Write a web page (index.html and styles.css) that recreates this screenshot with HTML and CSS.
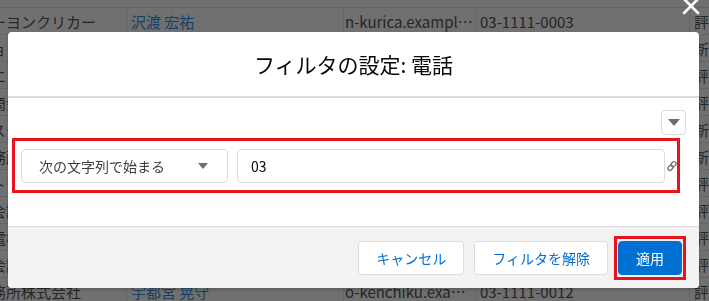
FILE: index.html
```html
<!DOCTYPE html>
<html lang="ja">
<head>
    <meta charset="UTF-8">
    <meta name="viewport" content="width=device-width, initial-scale=1.0">
    <title>フィルタの設定</title>
    <link rel="stylesheet" href="styles.css">
</head>
<body>
    <!-- List view behind the modal -->
    <div class="page">
        <table class="records">
            <tr>
                <td class="col-company">株式会社ピーエーヨンクリカー</td>
                <td class="col-contact"><a href="#">沢渡 宏祐</a></td>
                <td class="col-email">n-kurica.example.co.jp</td>
                <td class="col-phone">03-1111-0003</td>
                <td class="col-status">評価中</td>
            </tr>
            <tr>
                <td class="col-company">株式会社トウキョウ会計事務所</td>
                <td class="col-contact"><a href="#">高橋 一郎</a></td>
                <td class="col-email">t-kaikei.example.co.jp</td>
                <td class="col-phone">03-1111-0004</td>
                <td class="col-status">新規</td>
            </tr>
            <tr>
                <td class="col-company">有限会社サクラエンジニア</td>
                <td class="col-contact"><a href="#">佐藤 花子</a></td>
                <td class="col-email">sakura-eng.example.co.jp</td>
                <td class="col-phone">03-1111-0005</td>
                <td class="col-status">評価中</td>
            </tr>
            <tr>
                <td class="col-company">株式会社ミナト商会株式会社</td>
                <td class="col-contact"><a href="#">鈴木 健太</a></td>
                <td class="col-email">minato.example.co.jp</td>
                <td class="col-phone">03-1111-0006</td>
                <td class="col-status">評価中</td>
            </tr>
            <tr>
                <td class="col-company">日本グローバルスタッフ</td>
                <td class="col-contact"><a href="#">田中 美咲</a></td>
                <td class="col-email">g-staff.example.co.jp</td>
                <td class="col-phone">03-1111-0007</td>
                <td class="col-status">新規</td>
            </tr>
            <tr>
                <td class="col-company">中央建設設計事務所株式会社</td>
                <td class="col-contact"><a href="#">伊藤 直樹</a></td>
                <td class="col-email">chuo-kensetsu.example.co.jp</td>
                <td class="col-phone">03-1111-0008</td>
                <td class="col-status">新規</td>
            </tr>
            <tr>
                <td class="col-company">株式会社ネクストソフト</td>
                <td class="col-contact"><a href="#">渡辺 翔</a></td>
                <td class="col-email">nextsoft.example.co.jp</td>
                <td class="col-phone">03-1111-0009</td>
                <td class="col-status">評価中</td>
            </tr>
            <tr>
                <td class="col-company">株式会社ヤマト会計事務所</td>
                <td class="col-contact"><a href="#">山本 彩</a></td>
                <td class="col-email">yamato.example.co.jp</td>
                <td class="col-phone">03-1111-0010</td>
                <td class="col-status">評価中</td>
            </tr>
            <tr>
                <td class="col-company">株式会社ホクト電機工業所</td>
                <td class="col-contact"><a href="#">中村 亮</a></td>
                <td class="col-email">hokuto.example.co.jp</td>
                <td class="col-phone">03-1111-0011</td>
                <td class="col-status">評価中</td>
            </tr>
            <tr>
                <td class="col-company">株式会社ミドリ会計事務所</td>
                <td class="col-contact"><a href="#">小林 優</a></td>
                <td class="col-email">midori.example.co.jp</td>
                <td class="col-phone">03-1111-0013</td>
                <td class="col-status">評価中</td>
            </tr>
            <tr>
                <td class="col-company">山田建築設計事務所株式会社</td>
                <td class="col-contact"><a href="#">宇都宮 晃守</a></td>
                <td class="col-email">o-kenchiku.example.co.jp</td>
                <td class="col-phone">03-1111-0012</td>
                <td class="col-status">評価中</td>
            </tr>
        </table>
    </div>

    <!-- Close button of the modal -->
    <button class="modal-close" title="閉じる">
        <svg width="18" height="18" viewBox="0 0 18 18">
            <path d="M2 2 L16 16 M16 2 L2 16" stroke="#fff" stroke-width="2.6" stroke-linecap="round"/>
        </svg>
    </button>

    <section class="modal">
        <header class="modal-header">
            <h2>フィルタの設定: 電話</h2>
        </header>

        <div class="modal-body">
            <div class="body-tools">
                <button class="icon-button">
                    <svg width="12" height="7" viewBox="0 0 12 7"><path d="M0 0 H12 L6 7 Z" fill="#706e6b"/></svg>
                </button>
            </div>

            <div class="filter-row highlight">
                <div class="select-box">
                    <span>次の文字列で始まる</span>
                    <svg width="10" height="6" viewBox="0 0 10 6"><path d="M0 0 H10 L5 6 Z" fill="#706e6b"/></svg>
                </div>
                <input class="text-input" type="text" value="03">
                <svg class="link-icon" width="10" height="12" viewBox="0 0 10 12">
                    <g fill="none" stroke="#706e6b" stroke-width="1.3" transform="rotate(40 5 6)">
                        <rect x="3" y="0.8" width="4" height="5.6" rx="2"/>
                        <rect x="3" y="5.6" width="4" height="5.6" rx="2"/>
                    </g>
                </svg>
            </div>
        </div>

        <footer class="modal-footer">
            <button class="btn">キャンセル</button>
            <button class="btn btn-gap">フィルタを解除</button>
            <span class="highlight apply-mark">
                <button class="btn btn-brand">適用</button>
            </span>
        </footer>
    </section>
</body>
</html>
```

FILE: styles.css
```css
body {
    font-family: "Noto Sans CJK JP", "Noto Sans", sans-serif;
    background-color: #707070;
    margin: 0;
    padding: 0;
    overflow: hidden;
}

/* list view under the backdrop */
.page {
    padding-top: 7px;
}

.records {
    border-collapse: collapse;
    table-layout: fixed;
    margin-left: -120px;
    width: 950px;
    font-size: 15px;
    color: #262626;
}

.records tr {
    height: 27px;
    border-top: 1px solid #646464;
}

.records td {
    padding: 0 4px;
    white-space: nowrap;
    overflow: hidden;
    text-overflow: ellipsis;
    border-left: 1px solid #666;
}

.records a {
    color: #173f66;
    text-decoration: none;
}

.col-company {
    width: 236px;
    padding-left: 5px !important;
}

.col-contact {
    width: 208px;
}

.col-email {
    width: 128px;
    padding-left: 1px !important;
    padding-right: 2px !important;
}

.col-phone {
    width: 205px;
}

/* modal */
.modal-close {
    position: fixed;
    top: -3px;
    left: 682px;
    padding: 0;
    border: none;
    background: none;
    line-height: 0;
}

.modal {
    position: fixed;
    left: 8px;
    top: 32px;
    width: 691px;
    background-color: #fff;
    border-radius: 4px;
    overflow: hidden;
    box-shadow: 0 2px 3px rgba(0, 0, 0, 0.16);
}

.modal-header {
    height: 64px;
    display: flex;
    align-items: center;
    justify-content: center;
    border-bottom: 2px solid #dddbda;
}

.modal-header h2 {
    margin: 0;
    font-size: 21px;
    font-weight: 400;
    color: #080707;
}

.modal-body {
    height: 128px;
    box-sizing: border-box;
    padding: 12px 13px 0 4px;
}

.body-tools {
    display: flex;
    justify-content: flex-end;
    margin-bottom: 3px;
}

.icon-button {
    width: 25px;
    height: 25px;
    padding: 0;
    border: 1px solid #dddbda;
    border-radius: 4px;
    background-color: #fff;
    display: flex;
    align-items: center;
    justify-content: center;
}

.highlight {
    border: 3px solid #e8131b;
}

.filter-row {
    display: flex;
    align-items: center;
    margin-right: 6px;
    padding: 8px 0 7px 6px;
}

.select-box {
    width: 207px;
    height: 34px;
    box-sizing: border-box;
    border: 1px solid #dddbda;
    border-radius: 4px;
    padding: 0 19px 0 17px;
    display: flex;
    align-items: center;
    justify-content: space-between;
    font-size: 14px;
    color: #3e3e3c;
}

.text-input {
    flex: 1;
    min-width: 0;
    height: 34px;
    box-sizing: border-box;
    margin-left: 9px;
    padding: 0 13px;
    border: 1px solid #dddbda;
    border-radius: 4px;
    font-family: inherit;
    font-size: 14px;
    color: #080707;
}

.link-icon {
    margin-left: 2px;
}

.modal-footer {
    height: 62px;
    box-sizing: border-box;
    border-top: 1px solid #dddbda;
    background-color: #f3f2f2;
    display: flex;
    align-items: center;
    justify-content: flex-end;
    padding: 0 13px 0 0;
}

.btn {
    height: 34px;
    padding: 0 17px;
    border: 1px solid #dddbda;
    border-radius: 4px;
    background-color: #fff;
    color: #0070d2;
    font-family: inherit;
    font-size: 14px;
    cursor: pointer;
}

.btn-gap {
    margin-left: 10px;
}

.apply-mark {
    margin-left: 6px;
    padding: 2px 1px;
    display: flex;
}

.btn-brand {
    background-color: #0070d2;
    border-color: #0070d2;
    color: #fff;
}
```
